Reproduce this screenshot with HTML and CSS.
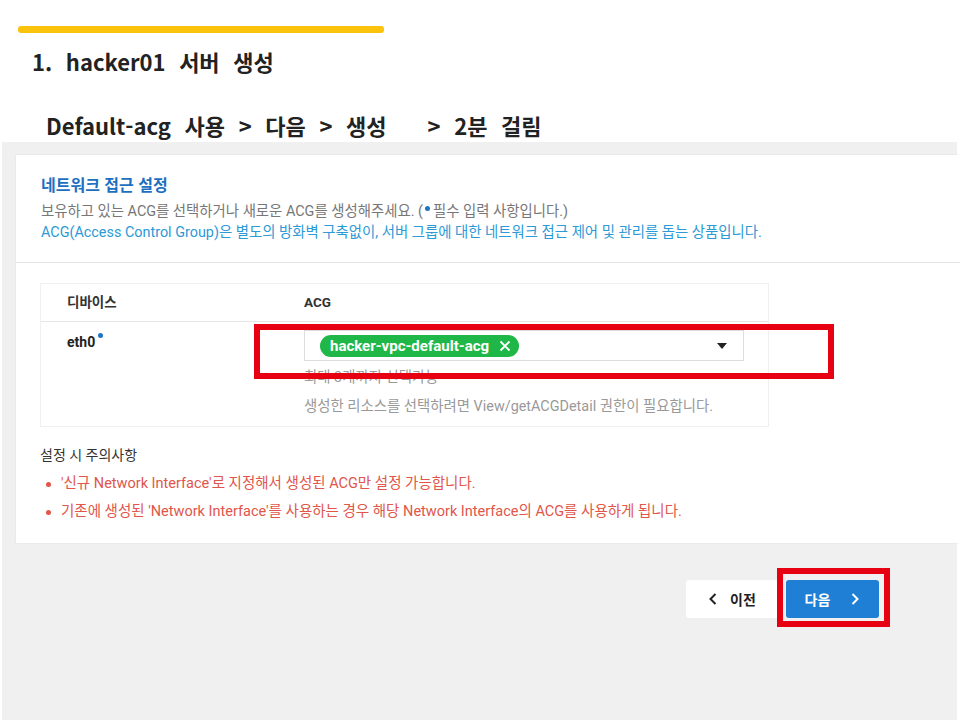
FILE: index.html
```html
<!DOCTYPE html>
<html lang="ko">
<head>
  <meta charset="UTF-8">
  <meta name="viewport" content="width=device-width, initial-scale=1.0">
  <title>hacker01 서버 생성</title>
  <link rel="stylesheet" href="styles.css">
</head>
<body>
  <div class="slide-head">
    <div class="accent"></div>
    <h1>1. hacker01 서버 생성</h1>
    <h2>Default-acg 사용 &gt; 다음 &gt; 생성   &gt; 2분 걸림</h2>
  </div>

  <div class="console">
    <div class="card">
      <div class="card-head">
        <h3>네트워크 접근 설정</h3>
        <p class="desc">보유하고 있는 ACG를 선택하거나 새로운 ACG를 생성해주세요. (<span class="dot"></span>필수 입력 사항입니다.)</p>
        <p class="info">ACG(Access Control Group)은 별도의 방화벽 구축없이, 서버 그룹에 대한 네트워크 접근 제어 및 관리를 돕는 상품입니다.</p>
      </div>

      <div class="card-body">
        <div class="acg-table">
          <div class="th">디바이스</div>
          <div class="th">ACG</div>
          <div class="td dev">eth0<span class="dot sup"></span></div>
          <div class="td">
            <div class="select marked">
              <span class="tag">hacker-vpc-default-acg
                <svg width="12" height="12" viewBox="0 0 12 12"><path d="M1.5 1.5l9 9M10.5 1.5l-9 9" stroke="#fff" stroke-width="1.8" fill="none"/></svg>
              </span>
              <span class="caret"></span>
            </div>
            <p class="hint">최대 3개까지 선택가능</p>
            <p class="hint">생성한 리소스를 선택하려면 View/getACGDetail 권한이 필요합니다.</p>
          </div>
        </div>

        <div class="notes">
          <p class="notes-title">설정 시 주의사항</p>
          <ul>
            <li>'신규 Network Interface'로 지정해서 생성된 ACG만 설정 가능합니다.</li>
            <li>기존에 생성된 'Network Interface'를 사용하는 경우 해당 Network Interface의 ACG를 사용하게 됩니다.</li>
          </ul>
        </div>
      </div>
    </div>

    <div class="actions">
      <button class="btn prev">
        <svg width="10" height="14" viewBox="0 0 10 14"><path d="M7.5 2L2.5 7l5 5" stroke="#222" stroke-width="2" fill="none"/></svg>
        이전
      </button>
      <button class="btn next marked">
        다음
        <svg width="10" height="14" viewBox="0 0 10 14"><path d="M2.5 2l5 5-5 5" stroke="#fff" stroke-width="2" fill="none"/></svg>
      </button>
    </div>
  </div>
</body>
</html>
```

FILE: styles.css
```css
body {
  margin: 0;
  font-family: "Noto Sans CJK KR", "Noto Sans", sans-serif;
  background: #fff;
  color: #222;
}

.slide-head {
  padding: 26px 0 0 18px;
  height: 116px;
}
.accent {
  width: 366px;
  height: 7px;
  border-radius: 3px;
  background: #fcc30c;
}
.slide-head h1,
.slide-head h2 {
  font-size: 22px;
  line-height: 36px;
  font-weight: 700;
  word-spacing: 7.5px;
}
.slide-head h1 {
  margin: 10px 0 0 14px;
}
.slide-head h2 {
  margin: 28px 0 0 28px;
  white-space: pre;
}

.console {
  margin: 0 3px 0 2px;
  height: 573px;
  background: #f0f0f0;
  padding-top: 13px;
}
.card {
  margin: 0 -3px 0 14px;
  background: #fff;
  box-shadow: 0 0 2px rgba(0,0,0,0.08);
  font-family: Roboto, "Noto Sans CJK KR", sans-serif;
}
.card-head {
  padding: 18px 25px 19px;
  border-bottom: 1px solid #e4e4e4;
}
.card-head h3 {
  margin: 0 0 6px;
  font-family: "Noto Sans CJK KR", sans-serif;
  font-size: 16px;
  line-height: 22px;
  color: #1d6fbf;
  font-weight: 700;
}
.card-head p {
  margin: 0;
  font-size: 14.4px;
  line-height: 21px;
}
.desc { color: #777; }
.info { color: #2b9ad6; }
.dot {
  display: inline-block;
  width: 5px;
  height: 5px;
  border-radius: 50%;
  background: #1f74c4;
  vertical-align: 5px;
  margin: 0 3px 0 2px;
}
.dot.sup {
  vertical-align: 9px;
  margin-left: 3px;
}

.card-body {
  padding: 20px 0 17px 24px;
}
.acg-table {
  width: 727px;
  display: grid;
  grid-template-columns: 263px 1fr;
  border: 1px solid #f0f0f0;
}
.th {
  height: 37px;
  line-height: 37px;
  font-size: 13.5px;
  font-weight: 700;
  color: #333;
  border-bottom: 1px solid #e6e6e6;
}
.th:first-child { padding-left: 26px; }
.td {
  padding: 8px 24px 5px 0;
}
.td.dev {
  padding-left: 26px;
  font-size: 14px;
  font-weight: 700;
  line-height: 24px;
  color: #222;
}
.select {
  position: relative;
  height: 29px;
  border: 1px solid #ddd;
  display: flex;
  align-items: center;
  padding: 0 16px 0 15px;
}
.tag {
  display: inline-flex;
  align-items: center;
  gap: 10px;
  height: 22px;
  padding: 0 8px 0 10px;
  border-radius: 11px;
  background: #1fb848;
  color: #fff;
  font-size: 15px;
  font-weight: 700;
}
.caret {
  margin-left: auto;
  width: 0;
  height: 0;
  border-left: 5px solid transparent;
  border-right: 5px solid transparent;
  border-top: 6px solid #222;
}
.hint {
  margin: 0;
  font-size: 14.4px;
  line-height: 29px;
  color: #999;
}
.hint:first-of-type { margin-top: 2px; }

.notes { padding-top: 16px; }
.notes-title {
  margin: 0 0 3px;
  font-size: 14px;
  line-height: 24px;
  color: #333;
}
.notes ul {
  margin: 0;
  padding: 0 0 0 6px;
  list-style: none;
}
.notes li {
  font-size: 14.5px;
  line-height: 28px;
  color: #e0564a;
  display: flex;
  align-items: center;
}
.notes li::before {
  content: "";
  width: 5px;
  height: 5px;
  border-radius: 50%;
  background: #e0564a;
  margin-right: 10px;
}

.actions {
  display: flex;
  justify-content: flex-end;
  gap: 8px;
  padding: 37px 78px 0 0;
}
.btn {
  height: 38px;
  border: 0;
  border-radius: 3px;
  font-family: inherit;
  font-size: 14px;
  font-weight: 700;
  display: flex;
  align-items: center;
  justify-content: center;
  gap: 12px;
}
.prev {
  width: 92px;
  background: #fff;
  color: #222;
}
.next {
  position: relative;
  width: 93px;
  background: #1f7fd5;
  color: #fff;
  gap: 20px;
}

/* red highlight frames */
.marked::after {
  content: "";
  position: absolute;
  border: 6px solid #e60012;
  pointer-events: none;
}
.select.marked::after {
  left: -51px;
  right: -91px;
  top: -7px;
  bottom: -19px;
}
.next.marked::after {
  left: -9px;
  right: -11px;
  top: -12px;
  bottom: -9px;
}
```
